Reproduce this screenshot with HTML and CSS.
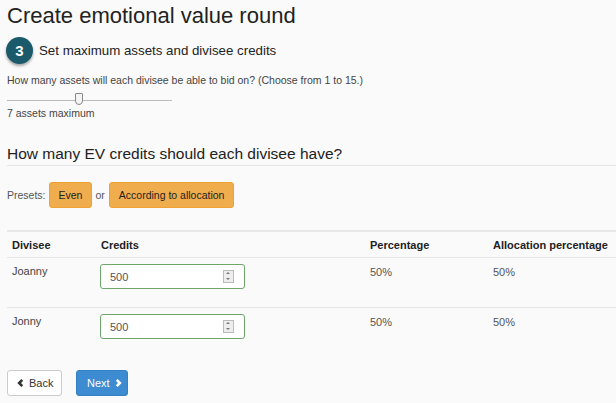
FILE: index.html
```html
<!DOCTYPE html>
<html>
<head>
<meta charset="utf-8">
<link rel="stylesheet" href="styles.css">
</head>
<body>
<div class="page">
  <h1 class="title">Create emotional value round</h1>
  <div class="step">
    <span class="badge">3</span>
    <span class="step-text">Set maximum assets and divisee credits</span>
  </div>
  <p class="question">How many assets will each divisee be able to bid on? (Choose from 1 to 15.)</p>
  <div class="slider">
    <div class="track"></div>
    <div class="thumb"></div>
  </div>
  <p class="slider-label">7 assets maximum</p>

  <h2 class="section">How many EV credits should each divisee have?</h2>
  <div class="presets">
    <span class="presets-label">Presets:</span>
    <button class="btn btn-warn">Even</button>
    <span class="or">or</span>
    <button class="btn btn-warn">According to allocation</button>
  </div>

  <table class="grid">
    <thead>
      <tr>
        <th class="c1">Divisee</th>
        <th class="c2">Credits</th>
        <th class="c3">Percentage</th>
        <th class="c4">Allocation percentage</th>
      </tr>
    </thead>
    <tbody>
      <tr>
        <td class="name">Joanny</td>
        <td class="credit"><div class="num"><span>500</span><span class="spin"><i class="up"></i><i class="down"></i></span></div></td>
        <td class="pct">50%</td>
        <td class="pct">50%</td>
      </tr>
      <tr>
        <td class="name">Jonny</td>
        <td class="credit"><div class="num"><span>500</span><span class="spin"><i class="up"></i><i class="down"></i></span></div></td>
        <td class="pct">50%</td>
        <td class="pct">50%</td>
      </tr>
    </tbody>
  </table>

  <div class="nav">
    <button class="btn btn-default"><svg class="chev" viewBox="0 0 8 10" width="7" height="10"><path d="M6 1.5 L2.5 5 L6 8.5" fill="none" stroke="#333" stroke-width="3"/></svg>Back</button>
    <button class="btn btn-primary">Next<svg class="chev chev-r" viewBox="0 0 8 10" width="7" height="10"><path d="M2 1.5 L5.5 5 L2 8.5" fill="none" stroke="#fff" stroke-width="3"/></svg></button>
  </div>
</div>
</body>
</html>
```

FILE: styles.css
```css
html, body {
  margin: 0;
  padding: 0;
  background: #fafafa;
}
body {
  font-family: "Liberation Sans", Arial, sans-serif;
  color: #333;
  width: 616px;
  height: 403px;
  overflow: hidden;
}
.page {
  padding: 0 0 0 7px;
}
.title {
  font-size: 22px;
  font-weight: normal;
  margin: 0;
  padding-top: 3px;
  line-height: 26px;
  color: #222;
}
.step {
  display: flex;
  align-items: center;
  margin-top: 7px;
  margin-left: -1px;
  height: 28px;
}
.badge {
  width: 27px;
  height: 27px;
  border-radius: 50%;
  background: #1b5a6b;
  color: #fff;
  font-size: 15px;
  font-weight: bold;
  display: flex;
  align-items: center;
  justify-content: center;
  box-shadow: 0 2px 3px rgba(0,0,0,0.35);
}
.step-text {
  font-size: 13.3px;
  margin-left: 6px;
  color: #222;
}
.question {
  font-size: 10.5px;
  margin: 10px 0 0;
  line-height: 13px;
  color: #444;
}
.slider {
  position: relative;
  width: 165px;
  height: 14px;
  margin-top: 6px;
}
.track {
  position: absolute;
  left: 0;
  right: 0;
  top: 7px;
  height: 1px;
  background: #bbb;
}
.thumb {
  position: absolute;
  left: 68px;
  top: 0;
  width: 6px;
  height: 10px;
  background: #f4f4f4;
  border: 1px solid #888;
  border-radius: 1px 1px 4px 4px;
}
.slider-label {
  font-size: 10.5px;
  margin: 0;
  line-height: 13px;
  color: #444;
}
.section {
  font-size: 15.5px;
  font-weight: normal;
  margin: 22px 0 0 0;
  line-height: 23px;
  padding-bottom: 0;
  border-bottom: 1px solid #e6e6e6;
  color: #222;
}
.presets {
  display: flex;
  align-items: center;
  margin-top: 16px;
  font-size: 10.5px;
  color: #555;
}
.presets-label {
  margin-right: 3px;
}
.or {
  margin: 0 4px 0 3px;
  font-size: 10.5px;
}
.btn {
  font-family: "Liberation Sans", Arial, sans-serif;
  font-size: 11px;
  height: 26px;
  border-radius: 3px;
  padding: 0 8px;
  display: inline-flex;
  align-items: center;
  cursor: pointer;
}
.btn-warn {
  background: #f0ad4e;
  border: 1px solid #eea236;
  color: #222;
  font-size: 10.5px;
  padding: 0 9px;
}
.grid {
  border-collapse: collapse;
  margin-top: 22px;
  width: 609px;
  font-size: 11px;
}
.grid th {
  text-align: left;
  font-weight: bold;
  color: #222;
  border-top: 2px solid #e8e8e8;
  border-bottom: 1px solid #e6e6e6;
  height: 25px;
  padding: 0 0 0 5px;
}
.grid th.c1 { width: 84px; }
.grid th.c2 { width: 264px; }
.grid th.c3 { width: 118px; }
.grid td {
  vertical-align: top;
  padding: 5px 0 0 5px;
  height: 50px;
  box-sizing: border-box;
  border-bottom: 1px solid #e6e6e6;
  color: #555;
  line-height: 14px;
}
.grid td.name { color: #444; padding-top: 6px; }
.grid td.pct { color: #555; padding-top: 7px; }
.grid td.credit { padding-top: 6px; }
.grid tbody tr:last-child td { border-bottom: none; }
.num {
  width: 145px;
  height: 25px;
  box-sizing: border-box;
  border: 1px solid #6ea56a;
  border-radius: 3px;
  background: #fff;
  display: flex;
  align-items: center;
  justify-content: space-between;
  padding: 0 10px 0 9px;
  margin-left: -1px;
  color: #555;
}
.spin {
  display: flex;
  flex-direction: column;
  width: 9px;
  height: 11px;
  border: 1px solid #bbb;
  background: #eee;
}
.spin i {
  flex: 1;
  display: block;
  position: relative;
}
.spin .up::after, .spin .down::after {
  content: "";
  position: absolute;
  left: 2px;
  border-left: 2px solid transparent;
  border-right: 2px solid transparent;
}
.spin .up::after { top: 1px; border-bottom: 2px solid #777; }
.spin .down::after { top: 1px; border-top: 2px solid #777; }
.nav {
  display: flex;
  gap: 14px;
  margin-top: 12px;
}
.btn-default {
  background: #fff;
  border: 1px solid #ccc;
  color: #333;
  padding: 0 9px 0 9px;
  width: 55px;
}
.btn-primary {
  background: #3d8bd0;
  border: 1px solid #3580c2;
  color: #fff;
  padding: 0 9px 0 10px;
  width: 52px;
}
.chev { margin-right: 5px; flex: none; }
.chev-r { margin-right: 0; margin-left: 5px; }
```
